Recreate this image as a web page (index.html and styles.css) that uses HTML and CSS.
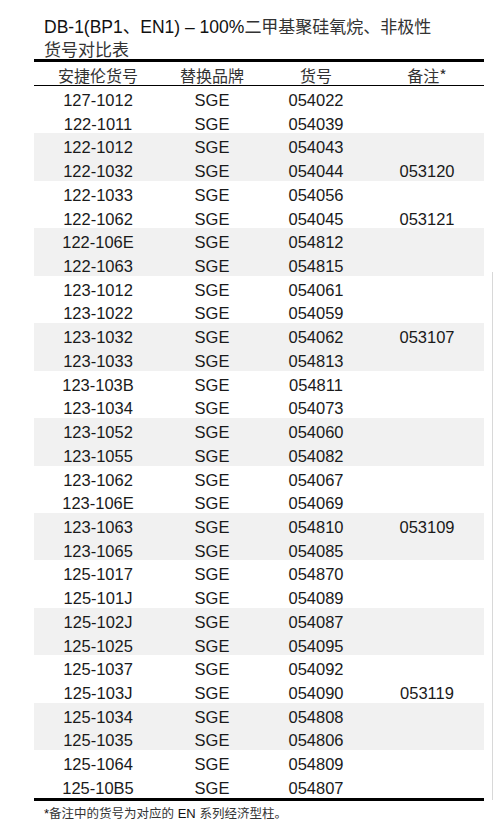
FILE: index.html
```html
<!DOCTYPE html>
<html lang="zh-CN">
<head>
<meta charset="utf-8">
<link rel="stylesheet" href="styles.css">
</head>
<body>
<div class="page">
  <h1 class="title">DB-1(BP1、EN1) – 100%<span class="cjk">二甲基聚硅氧烷、非极性</span><br><span class="cjk">货号对比表</span></h1>
  <div class="table">
    <div class="row head"><div>安捷伦货号</div><div>替换品牌</div><div>货号</div><div>备注*</div></div>
    <div class="row"><div>127-1012</div><div>SGE</div><div>054022</div><div></div></div>
    <div class="row"><div>122-1011</div><div>SGE</div><div>054039</div><div></div></div>
    <div class="row alt"><div>122-1012</div><div>SGE</div><div>054043</div><div></div></div>
    <div class="row alt"><div>122-1032</div><div>SGE</div><div>054044</div><div>053120</div></div>
    <div class="row"><div>122-1033</div><div>SGE</div><div>054056</div><div></div></div>
    <div class="row"><div>122-1062</div><div>SGE</div><div>054045</div><div>053121</div></div>
    <div class="row alt"><div>122-106E</div><div>SGE</div><div>054812</div><div></div></div>
    <div class="row alt"><div>122-1063</div><div>SGE</div><div>054815</div><div></div></div>
    <div class="row"><div>123-1012</div><div>SGE</div><div>054061</div><div></div></div>
    <div class="row"><div>123-1022</div><div>SGE</div><div>054059</div><div></div></div>
    <div class="row alt"><div>123-1032</div><div>SGE</div><div>054062</div><div>053107</div></div>
    <div class="row alt"><div>123-1033</div><div>SGE</div><div>054813</div><div></div></div>
    <div class="row"><div>123-103B</div><div>SGE</div><div>054811</div><div></div></div>
    <div class="row"><div>123-1034</div><div>SGE</div><div>054073</div><div></div></div>
    <div class="row alt"><div>123-1052</div><div>SGE</div><div>054060</div><div></div></div>
    <div class="row alt"><div>123-1055</div><div>SGE</div><div>054082</div><div></div></div>
    <div class="row"><div>123-1062</div><div>SGE</div><div>054067</div><div></div></div>
    <div class="row"><div>123-106E</div><div>SGE</div><div>054069</div><div></div></div>
    <div class="row alt"><div>123-1063</div><div>SGE</div><div>054810</div><div>053109</div></div>
    <div class="row alt"><div>123-1065</div><div>SGE</div><div>054085</div><div></div></div>
    <div class="row"><div>125-1017</div><div>SGE</div><div>054870</div><div></div></div>
    <div class="row"><div>125-101J</div><div>SGE</div><div>054089</div><div></div></div>
    <div class="row alt"><div>125-102J</div><div>SGE</div><div>054087</div><div></div></div>
    <div class="row alt"><div>125-1025</div><div>SGE</div><div>054095</div><div></div></div>
    <div class="row"><div>125-1037</div><div>SGE</div><div>054092</div><div></div></div>
    <div class="row"><div>125-103J</div><div>SGE</div><div>054090</div><div>053119</div></div>
    <div class="row alt"><div>125-1034</div><div>SGE</div><div>054808</div><div></div></div>
    <div class="row alt"><div>125-1035</div><div>SGE</div><div>054806</div><div></div></div>
    <div class="row"><div>125-1064</div><div>SGE</div><div>054809</div><div></div></div>
    <div class="row"><div>125-10B5</div><div>SGE</div><div>054807</div><div></div></div>
  </div>
  <p class="note">*<span class="cjk">备注中的货号为对应的</span> EN <span class="cjk">系列经济型柱。</span></p>
</div>
<div class="edge"></div>
</body>
</html>
```

FILE: styles.css
```css
html, body {
  margin: 0;
  padding: 0;
  background: #fff;
}
body {
  font-family: "Liberation Sans", Arial, "Noto Sans CJK SC", sans-serif;
  color: #111;
  width: 494px;
  height: 824px;
  overflow: hidden;
  position: relative;
}
.cjk {
  font-family: "Noto Sans CJK SC", sans-serif;
  color: #333;
}
.page {
  padding-left: 34px;
  width: 450px;
}
.title {
  margin: 0;
  padding: 15px 0 0 10px;
  font-size: 17.5px;
  line-height: 21px;
  font-weight: normal;
  color: #111;
  height: 44px;
}
.title .cjk {
  font-size: 17px;
}
.table {
  border-top: 3px solid #000;
  border-bottom: 3px solid #000;
}
.row {
  display: grid;
  grid-template-columns: 128px 100px 108px 114px;
  height: 23.73px;
  align-items: start;
  font-size: 16.5px;
  color: #1a1a1a;
}
.row > div {
  text-align: center;
  line-height: 20px;
  padding-top: 4px;
}
.row.head {
  height: 23px;
  border-bottom: 1px solid #000;
  font-family: "Noto Sans CJK SC", sans-serif;
  font-size: 16px;
  color: #333;
}
.row.head > div {
  line-height: 20px;
  padding-top: 3px;
}
.row.alt {
  background: #f1f1f1;
}
.note {
  margin: 0;
  padding: 3px 0 0 10px;
  font-size: 13px;
  line-height: 18px;
  color: #111;
}
.note .cjk {
  font-size: 12.5px;
  color: #333;
}
.edge {
  position: absolute;
  left: 492px;
  top: 272px;
  width: 1px;
  height: 528px;
  background: #d8d8d8;
}
```
